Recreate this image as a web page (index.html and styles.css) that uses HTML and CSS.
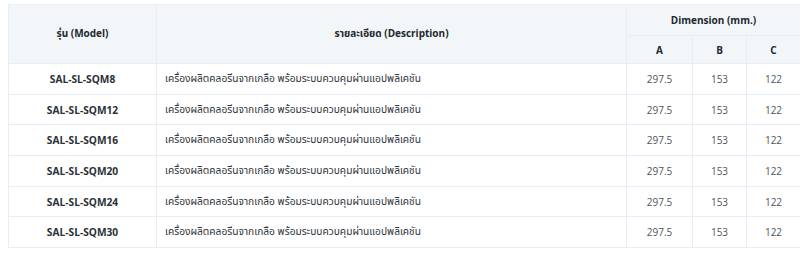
FILE: index.html
```html
<!DOCTYPE html>
<html lang="th">
<head>
<meta charset="utf-8">
<link rel="stylesheet" href="styles.css">
</head>
<body>
<table class="spec">
  <colgroup>
    <col class="c-model"><col class="c-desc"><col class="c-a"><col class="c-b"><col class="c-c">
  </colgroup>
  <thead>
    <tr class="h1">
      <th rowspan="2">รุ่น (Model)</th>
      <th rowspan="2">รายละเอียด (Description)</th>
      <th colspan="3">Dimension (mm.)</th>
    </tr>
    <tr class="h2">
      <th>A</th><th>B</th><th>C</th>
    </tr>
  </thead>
  <tbody>
    <tr><td class="model">SAL-SL-SQM8</td><td class="desc">เครื่องผลิตคลอรีนจากเกลือ พร้อมระบบควบคุมผ่านแอปพลิเคชัน</td><td class="num">297.5</td><td class="num">153</td><td class="num">122</td></tr>
    <tr><td class="model">SAL-SL-SQM12</td><td class="desc">เครื่องผลิตคลอรีนจากเกลือ พร้อมระบบควบคุมผ่านแอปพลิเคชัน</td><td class="num">297.5</td><td class="num">153</td><td class="num">122</td></tr>
    <tr><td class="model">SAL-SL-SQM16</td><td class="desc">เครื่องผลิตคลอรีนจากเกลือ พร้อมระบบควบคุมผ่านแอปพลิเคชัน</td><td class="num">297.5</td><td class="num">153</td><td class="num">122</td></tr>
    <tr><td class="model">SAL-SL-SQM20</td><td class="desc">เครื่องผลิตคลอรีนจากเกลือ พร้อมระบบควบคุมผ่านแอปพลิเคชัน</td><td class="num">297.5</td><td class="num">153</td><td class="num">122</td></tr>
    <tr><td class="model">SAL-SL-SQM24</td><td class="desc">เครื่องผลิตคลอรีนจากเกลือ พร้อมระบบควบคุมผ่านแอปพลิเคชัน</td><td class="num">297.5</td><td class="num">153</td><td class="num">122</td></tr>
    <tr><td class="model">SAL-SL-SQM30</td><td class="desc">เครื่องผลิตคลอรีนจากเกลือ พร้อมระบบควบคุมผ่านแอปพลิเคชัน</td><td class="num">297.5</td><td class="num">153</td><td class="num">122</td></tr>
  </tbody>
</table>
</body>
</html>
```
FILE: styles.css
```css
html, body {
  margin: 0;
  background: #ffffff;
}
body {
  padding: 4px 0 0 8px;
  font-family: "Open Sans", "Noto Sans", "Noto Sans Thai", "DejaVu Sans", sans-serif;
  font-size: 10.5px;
  color: #333a40;
  overflow: hidden;
}
.spec {
  border-collapse: collapse;
  width: 792px;
  table-layout: fixed;
}
.c-model { width: 148px; }
.c-desc { width: 470px; }
.c-a { width: 66px; }
.c-b { width: 54px; }
.c-c { width: 54px; }
.spec th, .spec td {
  border: 1px solid #e8eef5;
  padding: 0 8px;
}
.spec thead th {
  background: #f3f6f9;
  font-weight: 700;
  font-size: 10px;
  color: #22282e;
  text-align: center;
}
.h1 { height: 31px; }
.h2 { height: 28px; }
.spec tbody tr { height: 30.7px; }
.spec td.model {
  text-align: center;
  font-weight: 700;
  font-size: 10.2px;
  color: #2b3137;
}
.spec td.desc {
  text-align: left;
  color: #2f353b;
  font-size: 10.2px;
}
.spec td.num {
  text-align: center;
  color: #50555b;
  font-size: 10px;
}
```
